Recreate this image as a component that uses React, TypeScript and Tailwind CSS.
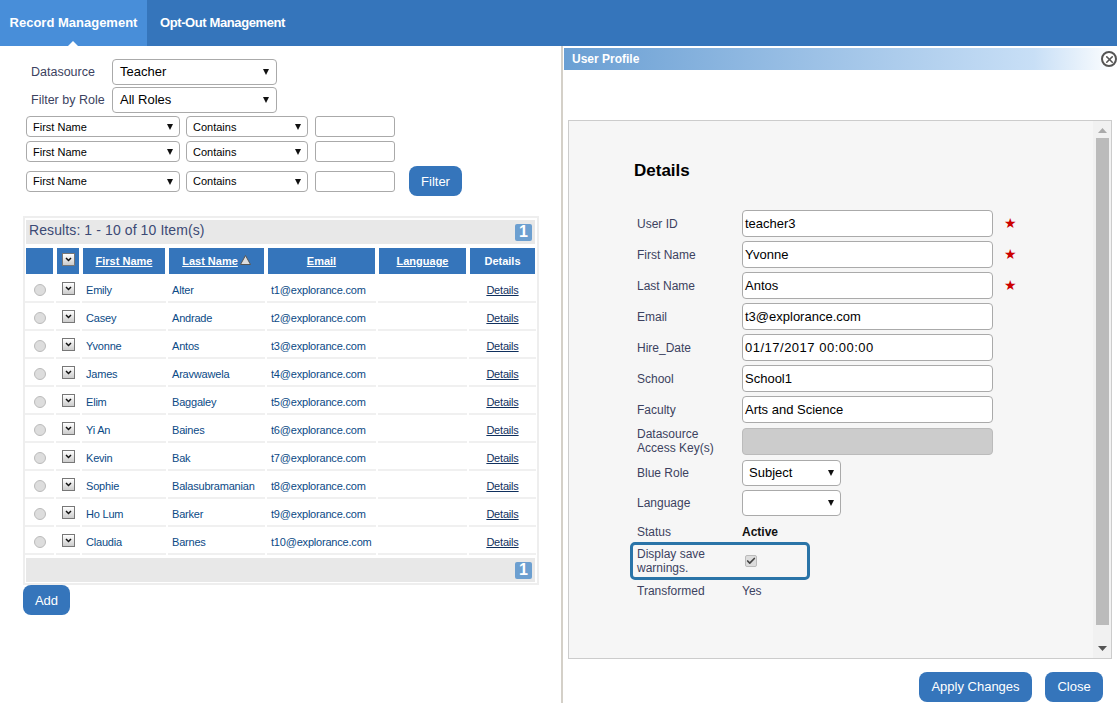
import { Check, X } from "lucide-react";

const people = [
  ["Emily", "Alter", "t1@explorance.com"],
  ["Casey", "Andrade", "t2@explorance.com"],
  ["Yvonne", "Antos", "t3@explorance.com"],
  ["James", "Aravwawela", "t4@explorance.com"],
  ["Elim", "Baggaley", "t5@explorance.com"],
  ["Yi An", "Baines", "t6@explorance.com"],
  ["Kevin", "Bak", "t7@explorance.com"],
  ["Sophie", "Balasubramanian", "t8@explorance.com"],
  ["Ho Lum", "Barker", "t9@explorance.com"],
  ["Claudia", "Barnes", "t10@explorance.com"],
];

const columns = "grid grid-cols-[29px_24px_84px_97px_109px_89px_67px] gap-x-[2px]";

function Caret() {
  return (
    <svg width="6" height="6" viewBox="0 0 6 6" className="shrink-0">
      <path d="M0 0h6L3 6z" fill="#111" />
    </svg>
  );
}

function FakeSelect({ value, className }: { value: string; className: string }) {
  return (
    <div className={`flex items-center justify-between rounded-[4px] border border-[#aaa] bg-white text-black ${className}`}>
      <span>{value}</span>
      <Caret />
    </div>
  );
}

function RowMenu({ className }: { className?: string }) {
  return (
    <div className={`flex h-[13px] w-[13px] items-center justify-center border border-[#777] bg-gradient-to-b from-white to-[#ccc] ${className ?? ""}`}>
      <svg width="7" height="5" viewBox="0 0 7 5">
        <path d="M1 1l2.5 2.5L6 1" fill="none" stroke="#111" strokeWidth="1.5" />
      </svg>
    </div>
  );
}

function PageBadge() {
  return (
    <div className="flex h-[17px] w-[17px] items-center justify-center rounded-[2px] bg-[#6c9fd0] text-[16px] font-bold text-white">
      1
    </div>
  );
}

function BlueButton({ label, className }: { label: string; className: string }) {
  return (
    <button className={`flex h-[30px] items-center justify-center rounded-[8px] bg-[#3575bb] text-[13px] text-white ${className}`}>
      {label}
    </button>
  );
}

function FilterRow({ className, children }: { className?: string; children?: React.ReactNode }) {
  return (
    <div className={`flex items-center ${className ?? ""}`}>
      <FakeSelect value="First Name" className="h-[21px] w-[154px] pl-[6px] pr-[6px] pt-px text-[11px]" />
      <FakeSelect value="Contains" className="ml-[6px] h-[21px] w-[122px] pl-[6px] pr-[6px] pt-px text-[11px]" />
      <div className="ml-[7px] h-[21px] w-[80px] rounded-[3px] border border-[#aaa] bg-white" />
      {children}
    </div>
  );
}

function HeaderCell({ label, link, sorted }: { label?: string; link?: boolean; sorted?: boolean }) {
  return (
    <div className="mx-px flex h-[26px] items-center justify-center bg-[#3575bb] text-[11px] font-bold text-white">
      <span className={link ? "underline" : ""}>{label}</span>
      {sorted && (
        <svg width="11" height="10" viewBox="0 0 11 10" className="mb-[3px] ml-[2px]">
          <path d="M5.5 0.5L10.5 9.5H0.5z" fill="#ddd" stroke="#555" strokeWidth="1" />
        </svg>
      )}
    </div>
  );
}

function FormRow({ label, className, children }: { label: React.ReactNode; className: string; children?: React.ReactNode }) {
  return (
    <div className={`flex items-center ${className}`}>
      <div className="w-[108px] pl-[3px] text-[12px] leading-[14px] text-[#3c4260]">{label}</div>
      {children}
    </div>
  );
}

function TextField({ value, required, className }: { value: string; required?: boolean; className?: string }) {
  return (
    <>
      <div className={`flex h-[27px] w-[251px] items-center rounded-[4px] border border-[#aaa] bg-white pl-[2px] text-[13px] text-black ${className ?? ""}`}>
        {value}
      </div>
      {required && <span className="-mt-[2px] ml-[11px] text-[14px] leading-none text-[#cc0000]">★</span>}
    </>
  );
}

export default function App() {
  return (
    <div className="flex h-[703px] w-[1117px] flex-col overflow-hidden bg-white font-['Liberation_Sans',Arial,sans-serif]">
      <div className="flex h-[46px] shrink-0 bg-[#3575bb] text-[13px] font-bold text-white">
        <div className="relative flex w-[147px] items-center justify-center bg-[#488ed9]">
          Record Management
          <div className="absolute bottom-0 left-[68px] h-0 w-0 border-x-[5px] border-b-[5px] border-x-transparent border-b-white" />
        </div>
        <div className="flex items-center pl-[13px] tracking-[-0.4px]">Opt-Out Management</div>
      </div>

      <div className="flex min-h-0 flex-1">
        <div className="w-[561px] shrink-0 pl-[23px] pt-[13px]">
          <div className="flex items-center pl-[8px] text-[12.5px] text-[#3c4260]">
            <div className="w-[81px]">Datasource</div>
            <FakeSelect value="Teacher" className="h-[26px] w-[165px] pl-[7px] pr-[7px] text-[13px]" />
          </div>
          <div className="mt-[2px] flex items-center pl-[8px] text-[12.5px] text-[#3c4260]">
            <div className="w-[81px]">Filter by Role</div>
            <FakeSelect value="All Roles" className="h-[26px] w-[165px] pl-[7px] pr-[7px] text-[13px]" />
          </div>
          <div className="mt-[3px] pl-[3px]">
            <FilterRow />
            <FilterRow className="mt-[4px]" />
            <FilterRow className="mt-[4px] h-[30px]">
              <BlueButton label="Filter" className="ml-[14px] w-[53px] pt-px" />
            </FilterRow>
          </div>

          <div className="mt-[20px] w-[516px] border-2 border-[#eee] pt-[2px] pb-px">
            <div className="mx-px flex h-[24px] w-[509px] items-center justify-between bg-[#e8e8e8] pl-[3px] pr-[3px] text-[14px] tracking-[0.1px] text-[#3c4a75]">
              <span className="pb-[3px]">Results: 1 - 10 of 10 Item(s)</span>
              <PageBadge />
            </div>
            <div className={`${columns} mt-[4px] w-[511px]`}>
              <HeaderCell />
              <div className="mx-px flex h-[26px] items-center justify-center bg-[#3575bb]">
                <RowMenu className="mb-[3px]" />
              </div>
              <HeaderCell label="First Name" link />
              <HeaderCell label="Last Name" link sorted />
              <HeaderCell label="Email" link />
              <HeaderCell label="Language" link />
              <HeaderCell label="Details" />
            </div>
            <div className={`${columns} mt-px w-[511px] text-[11px] tracking-[-0.2px] text-[#0b4a86]`}>
              {people.map(([first, last, email]) => (
                <div key={email} className="contents">
                  <div className="flex h-[28px] items-center justify-center border-b-2 border-[#f0f0f0] pt-[3px]">
                    <div className="h-[12px] w-[12px] rounded-full border border-[#bbb] bg-[#ddd]" />
                  </div>
                  <div className="flex h-[28px] items-start justify-center border-b-2 border-[#f0f0f0] pt-[7px]">
                    <RowMenu />
                  </div>
                  <div className="flex h-[28px] items-center border-b-2 border-[#f0f0f0] pl-[4px] pt-[5px]">{first}</div>
                  <div className="flex h-[28px] items-center border-b-2 border-[#f0f0f0] pl-[4px] pt-[5px]">{last}</div>
                  <div className="flex h-[28px] items-center whitespace-nowrap border-b-2 border-[#f0f0f0] pl-[4px] pt-[5px]">{email}</div>
                  <div className="h-[28px] border-b-2 border-[#f0f0f0]" />
                  <div className="flex h-[28px] items-center justify-center border-b-2 border-[#f0f0f0] pt-[5px] text-[#10305e] underline">Details</div>
                </div>
              ))}
            </div>
            <div className="mx-px mt-[3px] flex h-[24px] w-[509px] items-center justify-end bg-[#e8e8e8] pr-[3px]">
              <PageBadge />
            </div>
          </div>
          <BlueButton label="Add" className="w-[47px] pt-px" />
        </div>

        <div className="flex w-[556px] flex-col border-l-2 border-[#d4d0c8] pt-[2px]">
          <div className="ml-px flex h-[22px] items-center justify-between bg-gradient-to-r from-[#6a9fd3] via-[#c8dff6] via-85% to-white pl-[8px] text-[12px] font-bold text-white">
            <span>User Profile</span>
            <div className="flex h-[16px] w-[16px] items-center justify-center rounded-full border-2 border-[#555] bg-white">
              <X size={11} strokeWidth={3.5} color="#555" />
            </div>
          </div>

          <div className="mb-[13px] ml-[5px] mr-[5px] mt-[50px] flex h-[539px] border border-[#ccc] bg-[#f6f6f6]">
            <div className="flex-1 pl-[65px] pt-[40px]">
              <div className="text-[17px] font-bold leading-[20px] text-black">Details</div>
              <FormRow label="User ID" className="mt-[29px]"><TextField value="teacher3" required /></FormRow>
              <FormRow label="First Name" className="mt-[4px]"><TextField value="Yvonne" required /></FormRow>
              <FormRow label="Last Name" className="mt-[4px]"><TextField value="Antos" required /></FormRow>
              <FormRow label="Email" className="mt-[4px]"><TextField value="t3@explorance.com" /></FormRow>
              <FormRow label="Hire_Date" className="mt-[4px]"><TextField value="01/17/2017 00:00:00" className="tracking-[0.5px]" /></FormRow>
              <FormRow label="School" className="mt-[4px]"><TextField value="School1" /></FormRow>
              <FormRow label="Faculty" className="mt-[4px]"><TextField value="Arts and Science" /></FormRow>
              <FormRow label={<>Datasource<br />Access Key(s)</>} className="mt-[4px]">
                <div className="h-[27px] w-[251px] rounded-[4px] border border-[#bbb] bg-[#ccc]" />
              </FormRow>
              <FormRow label="Blue Role" className="mt-[5px]">
                <FakeSelect value="Subject" className="h-[26px] w-[99px] pl-[6px] pr-[6px] text-[13px]" />
              </FormRow>
              <FormRow label="Language" className="mt-[4px]">
                <FakeSelect value="" className="h-[26px] w-[99px] pl-[6px] pr-[6px] text-[13px]" />
              </FormRow>
              <FormRow label="Status" className="mt-[9px]">
                <span className="text-[12px] font-bold leading-[14px] text-[#111]">Active</span>
              </FormRow>
              <div className="-ml-[4px] mt-[3px] flex h-[38px] w-[180px] items-center rounded-[5px] border-[3px] border-[#2a74a8] pl-[4px]">
                <div className="w-[108px] text-[12px] leading-[14px] text-[#3c4260]">Display save<br />warnings.</div>
                <div className="flex h-[12px] w-[12px] items-center justify-center rounded-[2px] border border-[#bbb] bg-[#ddd]">
                  <Check size={10} strokeWidth={4} color="#444" />
                </div>
              </div>
              <FormRow label="Transformed" className="mt-[4px]">
                <span className="text-[12px] leading-[14px] text-[#3c4260]">Yes</span>
              </FormRow>
            </div>
            <div className="flex w-[18px] shrink-0 flex-col items-center bg-[#f1f1f1]">
              <svg width="9" height="5" viewBox="0 0 9 5" className="mt-[7px]"><path d="M0 5L4.5 0 9 5z" fill="#aaa" /></svg>
              <div className="mt-[5px] h-[487px] w-[13px] bg-[#bbb]" />
              <svg width="9" height="5" viewBox="0 0 9 5" className="mt-[21px]"><path d="M0 0h9L4.5 5z" fill="#555" /></svg>
            </div>
          </div>

          <div className="flex justify-end gap-[13px] pr-[14px]">
            <BlueButton label="Apply Changes" className="w-[113px]" />
            <BlueButton label="Close" className="w-[58px]" />
          </div>
        </div>
      </div>
    </div>
  );
}
